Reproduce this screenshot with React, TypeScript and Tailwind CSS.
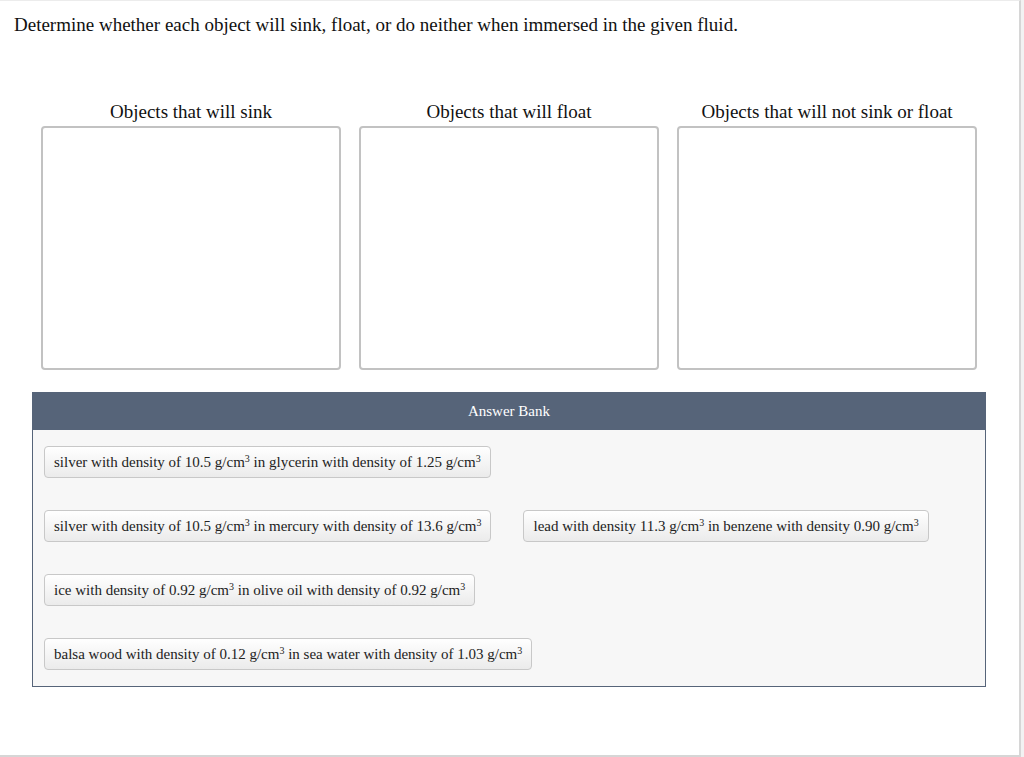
import React from "react";

const serif = { fontFamily: '"Liberation Serif", "Times New Roman", serif' };

function Cm3() {
  return (
    <>
      g/cm<sup className="text-[10px]">3</sup>
    </>
  );
}

function Chip({ children }: { children: React.ReactNode }) {
  return (
    <div className="h-[32px] flex items-center px-[9px] rounded-[4px] border border-[#c8c8c8] bg-gradient-to-b from-white to-[#ebebeb] text-[15px] text-[#222] whitespace-nowrap">
      <span>{children}</span>
    </div>
  );
}

const columns = [
  "Objects that will sink",
  "Objects that will float",
  "Objects that will not sink or float",
];

export default function App() {
  return (
    <div className="h-[757px] w-[1024px] bg-[#f2f2f2]" style={serif}>
      <div className="h-[757px] w-[1021px] bg-white border-t border-t-[#ececec] border-r-2 border-b-2 border-[#d6d6d6]">
        <p className="pl-[14px] pt-[13px] text-[19px] leading-[22px] text-[#111]">
          Determine whether each object will sink, float, or do neither when immersed in the given fluid.
        </p>

        <div className="ml-[41px] mt-[65px] grid grid-cols-[300px_300px_300px] gap-x-[18px]">
          {columns.map((c) => (
            <div key={c} className="flex flex-col">
              <div className="text-center text-[19px] leading-[22px] text-[#111]">{c}</div>
              <div className="mt-[3px] h-[244px] rounded-[4px] border-2 border-[#c2c2c2] bg-white" />
            </div>
          ))}
        </div>

        <div className="ml-[32px] mt-[22px] w-[954px] border border-[#566479]">
          <div className="h-[37px] bg-[#566479] flex items-center justify-center text-[15px] text-white">
            Answer Bank
          </div>
          <div className="bg-[#f7f7f7] pl-[11px] pt-[16px] pb-[16px] flex flex-col gap-[32px]">
            <div className="flex">
              <Chip>
                silver with density of 10.5 <Cm3 /> in glycerin with density of 1.25 <Cm3 />
              </Chip>
            </div>
            <div className="flex gap-[32px]">
              <Chip>
                silver with density of 10.5 <Cm3 /> in mercury with density of 13.6 <Cm3 />
              </Chip>
              <Chip>
                lead with density 11.3 <Cm3 /> in benzene with density 0.90 <Cm3 />
              </Chip>
            </div>
            <div className="flex">
              <Chip>
                ice with density of 0.92 <Cm3 /> in olive oil with density of 0.92 <Cm3 />
              </Chip>
            </div>
            <div className="flex">
              <Chip>
                balsa wood with density of 0.12 <Cm3 /> in sea water with density of 1.03 <Cm3 />
              </Chip>
            </div>
          </div>
        </div>
      </div>
    </div>
  );
}
